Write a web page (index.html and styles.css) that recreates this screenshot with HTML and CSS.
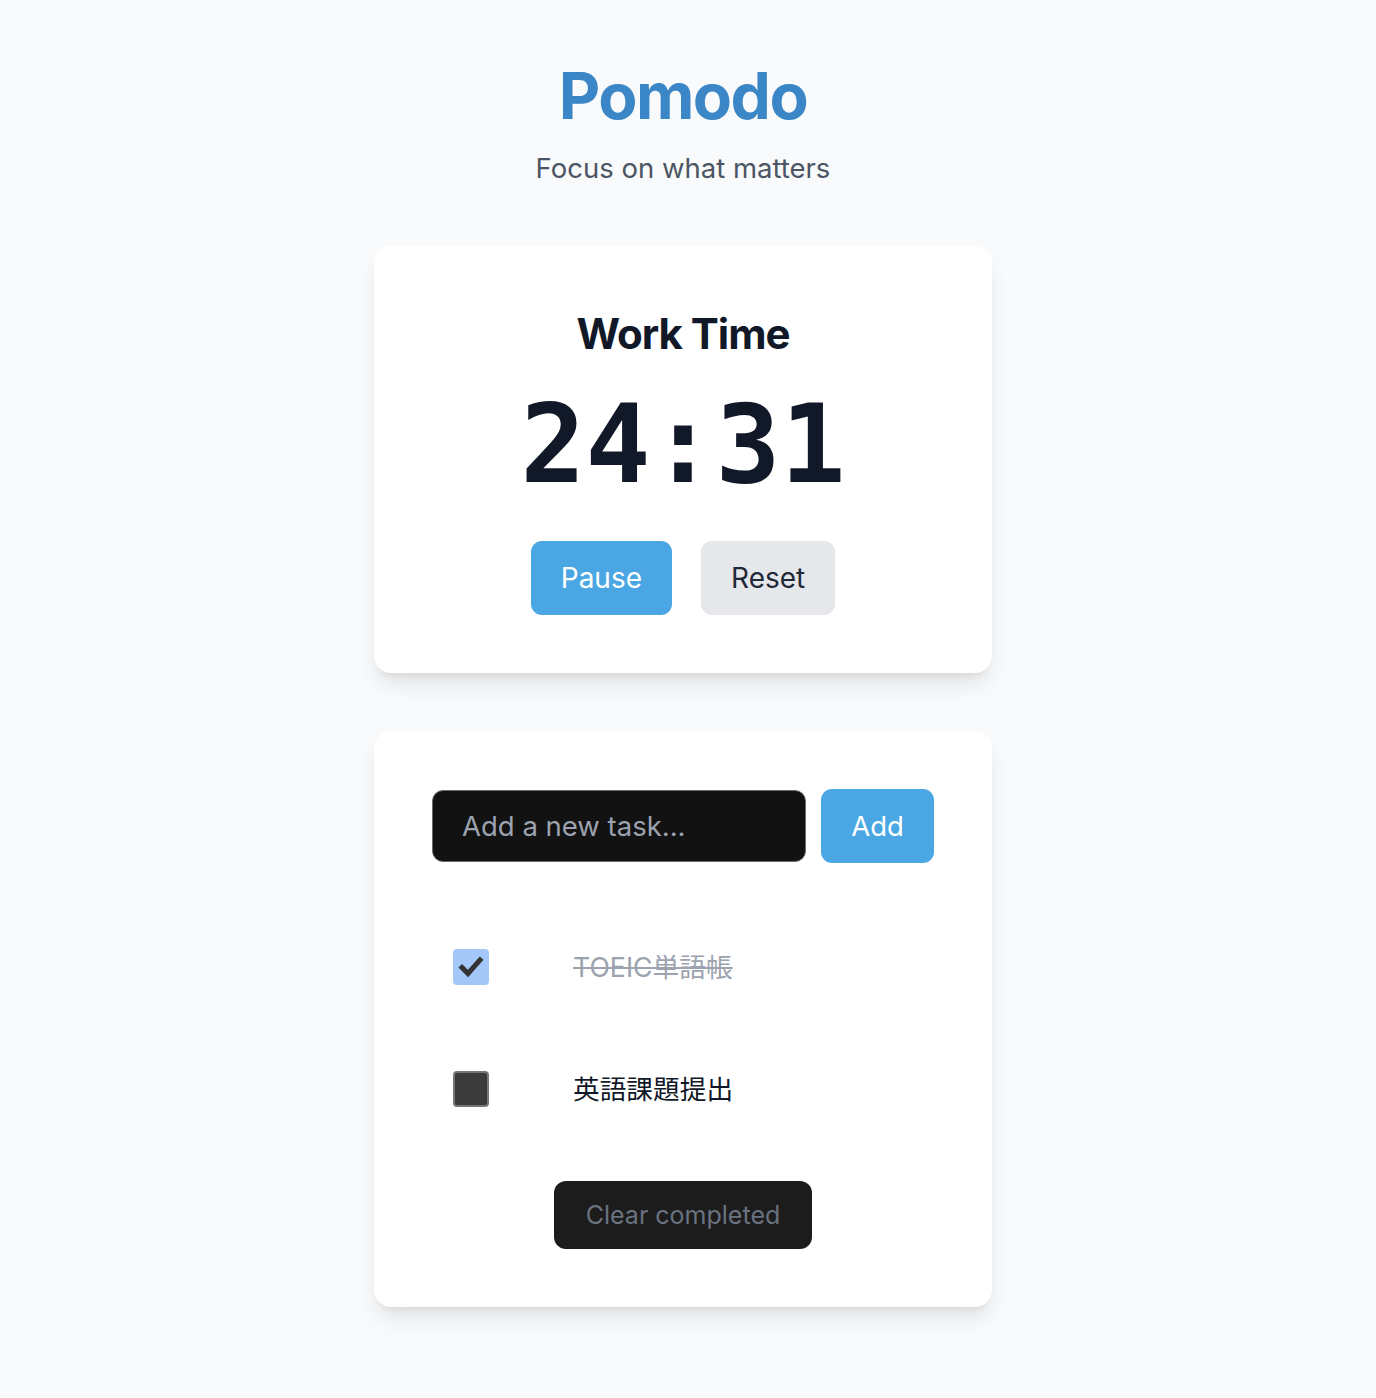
FILE: index.html
```html
<!DOCTYPE html>
<html lang="ja">
<head>
<meta charset="utf-8">
<title>Pomodo</title>
<link rel="stylesheet" href="styles.css">
</head>
<body>
<main class="app">
  <header class="header">
    <h1 class="title">Pomodo</h1>
    <p class="subtitle">Focus on what matters</p>
  </header>

  <section class="card timer-card">
    <h2 class="mode">Work Time</h2>
    <div class="timer">24:31</div>
    <div class="controls">
      <button class="btn btn-primary">Pause</button>
      <button class="btn btn-secondary">Reset</button>
    </div>
  </section>

  <section class="card tasks-card">
    <form class="task-form">
      <input class="task-input" type="text" placeholder="Add a new task...">
      <button class="btn btn-primary btn-add" type="button">Add</button>
    </form>
    <ul class="task-list">
      <li class="task">
        <span class="check checked">
          <svg viewBox="0 0 36 36" width="36" height="36"><path d="M9 18.5 L15 24.5 L27 11" fill="none" stroke="#333" stroke-width="5" stroke-linecap="square" stroke-linejoin="miter"/></svg>
        </span>
        <span class="task-text done">TOEIC単語帳</span>
      </li>
      <li class="task">
        <span class="check"></span>
        <span class="task-text">英語課題提出</span>
      </li>
    </ul>
    <div class="clear-wrap">
      <button class="btn-clear" type="button">Clear completed</button>
    </div>
  </section>
</main>
</body>
</html>
```

FILE: styles.css
```css
* { box-sizing: border-box; }
html, body { margin: 0; padding: 0; }
body {
  background: #f9fafb;
  font-family: Inter, "Noto Sans CJK JP", sans-serif;
  color: #111827;
}
.app {
  display: flex;
  flex-direction: column;
  align-items: center;
  padding-top: 58px;
  padding-right: 10px;
  padding-bottom: 60px;
}
.header { text-align: center; }
.title {
  margin: 0;
  font-size: 64px;
  line-height: 1.2;
  font-weight: 700;
  color: #3a86c6;
  letter-spacing: -1.5px;
}
.subtitle {
  margin: 14px 0 0;
  font-size: 27.5px;
  line-height: 1.4;
  color: #4b5563;
}
.card {
  width: 618px;
  background: #fff;
  border-radius: 17px;
  padding: 58px;
  box-shadow: 0 14px 22px -4px rgba(0,0,0,0.1), 0 6px 9px -6px rgba(0,0,0,0.1);
}
.timer-card {
  margin-top: 59px;
  text-align: center;
}
.mode {
  margin: 0;
  font-size: 42px;
  line-height: 60px;
  font-weight: 700;
  letter-spacing: -1px;
  color: #111827;
}
.timer {
  margin-top: 27px;
  font-family: "DejaVu Sans Mono", monospace;
  font-weight: 700;
  font-size: 108px;
  line-height: 108px;
  color: #111827;
}
.controls {
  margin-top: 42px;
  display: flex;
  justify-content: center;
  gap: 29px;
}
.btn {
  border: none;
  font-family: Inter, sans-serif;
  font-size: 28px;
  line-height: 40px;
  padding: 17px 30px;
  border-radius: 11px;
  cursor: pointer;
}
.btn-primary { background: #4aa7e3; color: #fff; }
.btn-secondary { background: #e5e7eb; color: #1f2937; }
.tasks-card { margin-top: 58px; }
.task-form {
  display: flex;
  align-items: center;
  gap: 15px;
  margin: 0;
}
.task-input {
  flex: 1 1 auto;
  width: 0;
  min-width: 0;
  height: 72px;
  background: #121212;
  border: 1px solid #6b6b6b;
  border-radius: 11px;
  padding: 0 29px;
  font-family: Inter, sans-serif;
  font-size: 27.5px;
  color: #e5e7eb;
}
.task-input::placeholder { color: #9ca3af; }
.btn-add {
  flex: none;
  height: 74px;
  width: 113px;
  padding: 0;
  font-size: 27.5px;
}
.task-list {
  list-style: none;
  margin: 43px 0 0;
  padding: 0;
}
.task {
  height: 122px;
  display: flex;
  align-items: center;
  padding-left: 21px;
  gap: 84px;
}
.check {
  width: 36px;
  height: 36px;
  border-radius: 4px;
  background: #3b3b3b;
  border: 2px solid #767676;
  flex: none;
  display: block;
}
.check.checked {
  background: #a3c8f8;
  border: none;
}
.check svg { display: block; }
.task-text {
  font-size: 26.7px;
  line-height: 36px;
  color: #111827;
}
.task-text.done {
  color: #9ca3af;
  text-decoration: line-through;
}
.clear-wrap {
  margin-top: 31px;
  display: flex;
  justify-content: center;
}
.btn-clear {
  background: #1c1c1c;
  color: #6b7280;
  border: none;
  border-radius: 12px;
  height: 68px;
  width: 258px;
  font-family: Inter, sans-serif;
  font-size: 25px;
  cursor: pointer;
}
```
